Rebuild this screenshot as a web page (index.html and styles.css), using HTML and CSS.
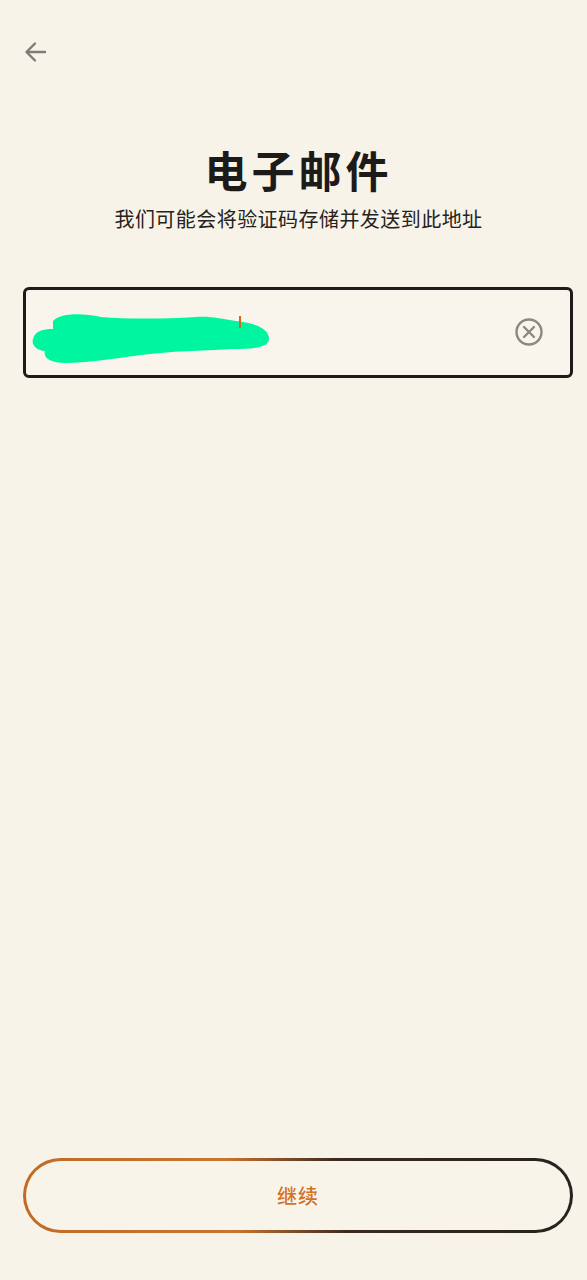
FILE: index.html
```html
<!DOCTYPE html>
<html lang="zh">
<head>
<meta charset="utf-8">
<link rel="stylesheet" href="styles.css">
</head>
<body>
<div class="page">
  <div class="topbar">
    <svg class="back" width="26" height="26" viewBox="0 0 26 26">
      <path d="M22 13H4M12 4.5L3.5 13L12 21.5" fill="none" stroke="#7d7b76" stroke-width="2.4" stroke-linecap="round" stroke-linejoin="round"/>
    </svg>
  </div>
  <h1 class="title">电子邮件</h1>
  <p class="subtitle">我们可能会将验证码存储并发送到此地址</p>
  <div class="field">
    <div class="value">
      <svg class="redact" width="240" height="56" viewBox="0 0 240 56">
        <path d="M22 10 C30 2 50 2 70 6 C95 8 130 8 165 6 C180 5 190 8 205 10 C225 12 238 18 238 28 C238 36 225 38 200 38 C170 40 140 40 110 44 C80 48 55 52 35 52 C18 52 12 46 14 40 C6 40 0 34 2 28 C4 20 12 18 22 18 Z" fill="#00f5a0"/>
      </svg>
      <span class="caret"></span>
    </div>
    <svg class="clear" width="30" height="30" viewBox="0 0 30 30">
      <circle cx="15" cy="15" r="12.5" fill="none" stroke="#8a8882" stroke-width="2.4"/>
      <path d="M10 10L20 20M20 10L10 20" stroke="#8a8882" stroke-width="2.4" stroke-linecap="round"/>
    </svg>
  </div>
  <div class="spacer"></div>
  <div class="btn"><span>继续</span></div>
</div>
</body>
</html>
```
FILE: styles.css
```css
html, body {
  margin: 0;
  padding: 0;
  background: #f8f3e8;
}
body {
  font-family: "Noto Sans CJK SC", "Noto Sans", sans-serif;
  color: #1c1b19;
}
.page {
  width: 587px;
  height: 1280px;
  display: flex;
  flex-direction: column;
  box-sizing: border-box;
  padding: 0 14px 0 23px;
}
.topbar {
  height: 139px;
  display: flex;
  align-items: flex-start;
  padding-top: 39px;
  box-sizing: border-box;
}
.back {
  display: block;
}
.title {
  margin: 0;
  text-align: center;
  font-size: 43px;
  line-height: 60px;
  font-weight: 700;
  letter-spacing: 4px;
  padding-left: 10px;
  padding-right: 9px;
  color: #1c1b19;
}
.subtitle {
  margin: 6px 0 0;
  text-align: center;
  font-size: 20px;
  line-height: 28px;
  letter-spacing: 0.45px;
  color: #242320;
  padding-left: 10px;
  padding-right: 9px;
}
.field {
  margin-top: 54px;
  height: 91px;
  border: 3px solid #1d1c1a;
  border-radius: 6px;
  box-sizing: border-box;
  background: #f9f5ec;
  display: flex;
  align-items: center;
  justify-content: space-between;
  padding: 0 26px 0 5px;
}
.value {
  position: relative;
  height: 56px;
  width: 240px;
  margin-top: 12px;
}
.redact {
  display: block;
}
.caret {
  position: absolute;
  left: 208px;
  top: 5px;
  width: 2px;
  height: 12px;
  background: #d46a1e;
}
.clear {
  display: block;
  margin-top: -2px;
}
.spacer {
  flex: 1;
}
.btn {
  margin-bottom: 47px;
  height: 75px;
  border-radius: 38px;
  border: 3px solid transparent;
  box-sizing: border-box;
  background:
    linear-gradient(#f9f4ea, #f9f4ea) padding-box,
    linear-gradient(82deg, #c06a26 0%, #c87530 38%, #3a2a1e 58%, #262220 100%) border-box;
  display: flex;
  align-items: center;
  justify-content: center;
}
.btn span {
  font-size: 20px;
  color: #d27328;
  font-weight: 500;
  letter-spacing: 1px;
}
```
